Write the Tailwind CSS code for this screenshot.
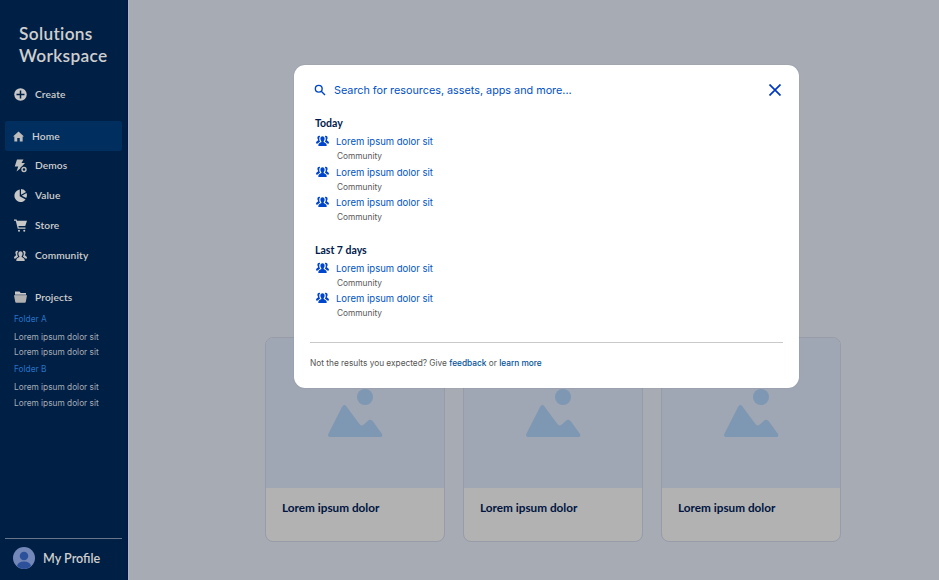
<!DOCTYPE html>
<html lang="en">
<head>
  <meta charset="UTF-8" />
  <title>Search - Solutions Workspace</title>
  <meta name="viewport" content="width=device-width, initial-scale=1.0" />
  <script src="https://cdn.jsdelivr.net/npm/@tailwindcss/browser@4"></script>
</head>

<body class="relative flex h-[580px] w-[939px] overflow-hidden bg-[#a6abb4] font-['Inter',sans-serif]">

  <!-- Shared icons -->
  <svg class="hidden">
    <symbol id="people" viewBox="0 0 28 24">
      <path d="M14 2c3 0 4.600 2.200 4.600 5.200 0 2-.8 4-2.100 5.200v1.700c0 1 5.700 2 6.300 5.200L23 23H5l.2-3.700c.6-3.200 6.300-4.200 6.300-5.200v-1.700C10.200 11.200 9.400 9.200 9.400 7.200 9.400 4.200 11 2 14 2z"/>
      <path d="M8.500 1C5.200 0 3 2.400 3 5.200c0 2.200 1 3.500 1.600 4.500.5 1.600-4.400 2.300-4.600 5.800v2.100h4.200c1-2.300 3-3.400 4.600-4.100C7.600 11.500 7 9 7 7c0-2.200.7-4 2-5.200z"/>
      <path d="M19.500 1c3.300-1 5.500 1.400 5.500 4.200 0 2.200-1 3.500-1.600 4.500-.5 1.600 4.400 2.300 4.600 5.800v2.100h-4.200c-1-2.300-3-3.400-4.600-4.100C20.400 11.500 21 9 21 7c0-2.200-.7-4-2-5.200z"/>
    </symbol>
    <symbol id="picture" viewBox="0 0 56 50">
      <circle cx="38" cy="9" r="8"/>
      <path d="M3 49Q0 48.500 1.500 45.500L15 19Q17 15.500 19.500 18.500L32 35.500Q34.500 39 37.500 36L41 32.700Q43.500 30.500 46 33.500L55 46Q56 49 53.500 49z"/>
    </symbol>
  </svg>

  <!-- Sidebar -->
  <aside class="flex w-32 shrink-0 flex-col border-r border-[#07144a] bg-[#001f44] text-[#cfcfcf] shadow-[1px_0_0_#b2b4bd]">
    <h1 class="mt-[23px] ml-[19px] font-['Lato',sans-serif] text-[17.3px] leading-[22px] font-semibold tracking-[0.32px]">Solutions<br />Workspace</h1>

    <nav class="mt-[12px] flex flex-col pl-[5px] font-['Lato',sans-serif] text-[10.2px] font-semibold tracking-[0.1px]">
      <a href="#" class="flex h-[30px] items-center gap-2 pl-[9px]">
        <svg class="h-[13px] w-[13px]" viewBox="0 0 26 26"><circle cx="13" cy="13" r="12.500" fill="#c7c7c7"/><path d="M13 5v16M5 13h16" stroke="#001f44" stroke-width="3"/></svg>
        <span class="pt-px">Create</span>
      </a>
      <a href="#" class="mt-[12px] flex h-[30px] w-[117px] items-center gap-2 rounded-[2px] bg-[#002e5e] pl-[8px]">
        <svg class="h-[11px] w-[11px]" viewBox="0 0 22 22" fill="#bdbdbd"><path d="M11 1 22 11h-2.700v10h-5.800v-7h-5v7H2.700V11H0z"/></svg>
        <span class="pt-px">Home</span>
      </a>
      <a href="#" class="flex h-[30px] items-center gap-2 pb-px pl-[9px]">
        <svg class="h-[14px] w-[13px]" viewBox="0 0 26 28" fill="#c0c0c0"><path d="M6 1h13l-4 7h7l-6 6.500a7 7 0 0 0-4 5L5 25l3.500-10H1.500z"/><circle cx="20" cy="21" r="4" fill="none" stroke="#c0c0c0" stroke-width="2.800"/></svg>
        <span class="pt-px">Demos</span>
      </a>
      <a href="#" class="flex h-[30px] items-center gap-2 pb-px pl-[9px]">
        <svg class="h-[13px] w-[13px]" viewBox="0 0 26 26" fill="#c7c7c7"><path d="M11.500 1v13.500l11.700 6.500A12.500 12.500 0 1 1 11.500 1z"/><path d="M14 0a12 12 0 0 1 10 6L14 11.500z"/><path d="M25 8.200A12 12 0 0 1 24.500 18L15.500 13.400z"/></svg>
        <span class="pt-px">Value</span>
      </a>
      <a href="#" class="flex h-[30px] items-center gap-2 pb-px pl-[9px]">
        <svg class="h-[13px] w-[13px]" viewBox="0 0 26 26" fill="#c7c7c7"><path d="M0 1h5.200l.8 2.500h20L22.500 14H8.800l.7 3H23v2.500H7.500L3.500 3.500H0z"/><circle cx="10" cy="23.300" r="2"/><circle cx="20.500" cy="23.300" r="2"/></svg>
        <span class="pt-px">Store</span>
      </a>
      <a href="#" class="flex h-[30px] items-center gap-2 pb-px pl-[9px]">
        <svg class="h-[12px] w-[13px] fill-[#c0c0c0]"><use href="#people"/></svg>
        <span class="pt-px">Community</span>
      </a>
      <a href="#" class="mt-[11px] flex h-[30px] items-center gap-2 pl-[9px]">
        <svg class="h-[12px] w-[13px]" viewBox="0 0 26 24"><path d="M2 1h9l2.500 3H24v5H2z" fill="#c7c7c7"/><path d="M2 7.800h22" stroke="#001f44" stroke-width="1"/><path d="M0 8.500h26L23.500 22q-.3 1.500-2 1.500h-17q-1.700 0-2-1.500z" fill="#b0b0b0"/></svg>
        <span class="pt-px">Projects</span>
      </a>
    </nav>

    <div class="ml-[14px] flex flex-col text-[8.3px] leading-[15.7px] text-[#a7adb8]">
      <a href="#" class="text-[#2872c4]">Folder A</a>
      <a href="#" class="mt-[2px]">Lorem ipsum dolor sit</a>
      <a href="#">Lorem ipsum dolor sit</a>
      <a href="#" class="mt-px text-[#2872c4]">Folder B</a>
      <a href="#" class="mt-[2px]">Lorem ipsum dolor sit</a>
      <a href="#">Lorem ipsum dolor sit</a>
    </div>

    <a href="#" class="mt-auto mr-[5px] ml-[5px] flex h-[42px] items-center gap-2 border-t-[1.5px] border-[#68758a] pb-[3px] pl-[8px] font-['Lato',sans-serif] text-[12.6px] font-semibold">
      <svg class="h-[22px] w-[22px]" viewBox="0 0 44 44"><circle cx="22" cy="22" r="22" fill="#7388b8"/><circle cx="22" cy="18" r="8.500" fill="#2d509b"/><path d="M8 38Q10 29 22 29t14 9Q30 44 22 44T8 38z" fill="#2d509b"/></svg>
      <span class="pt-[2px]">My Profile</span>
    </a>
  </aside>

  <!-- Resource cards -->
  <main class="flex flex-1 items-end gap-[18px] pb-[38px] pl-[137px] font-['Lato',sans-serif] text-[11.75px] font-bold text-[#001440]">
    <div class="h-[205px] w-[180px] overflow-hidden rounded-lg border border-[#989ba8] bg-[#b2b2b2]">
      <div class="flex h-[150px] justify-center bg-[#9fa6b4] pt-[50px]"><svg class="h-[50px] w-[56px] fill-[#7e98b4]"><use href="#picture"/></svg></div>
      <h3 class="mt-[12px] pl-4 leading-4">Lorem ipsum dolor</h3>
    </div>
    <div class="h-[205px] w-[180px] overflow-hidden rounded-lg border border-[#989ba8] bg-[#b2b2b2]">
      <div class="flex h-[150px] justify-center bg-[#9fa6b4] pt-[50px]"><svg class="h-[50px] w-[56px] fill-[#7e98b4]"><use href="#picture"/></svg></div>
      <h3 class="mt-[12px] pl-4 leading-4">Lorem ipsum dolor</h3>
    </div>
    <div class="h-[205px] w-[180px] overflow-hidden rounded-lg border border-[#989ba8] bg-[#b2b2b2]">
      <div class="flex h-[150px] justify-center bg-[#9fa6b4] pt-[50px]"><svg class="h-[50px] w-[56px] fill-[#7e98b4]"><use href="#picture"/></svg></div>
      <h3 class="mt-[12px] pl-4 leading-4">Lorem ipsum dolor</h3>
    </div>
  </main>

  <!-- Search dialog -->
  <div class="absolute top-[65px] left-[294px] flex h-[323px] w-[505px] flex-col rounded-[11px] bg-white px-4 shadow-[0_0_1px_#777c88]">
    <div class="mt-[15px] flex h-5 items-center pl-[4px] text-[10.8px] text-[#0050c8]">
      <svg class="mr-[8px] h-3 w-3" viewBox="0 0 24 24" fill="none" stroke="#0046c8" stroke-width="2.800"><circle cx="9.500" cy="9.500" r="6.800"/><path d="m14.500 14.500 7.500 7.500"/></svg>
      <span class="pt-[2px]">Search for resources, assets, apps and more...</span>
      <svg class="mr-[2px] ml-auto h-3 w-3" viewBox="0 0 24 24" stroke="#0038c4" stroke-width="3.400"><path d="m1 1 22 22M23 1 1 23"/></svg>
    </div>

    <h2 class="mt-[15px] pl-[5px] font-['Lato',sans-serif] text-[10.5px] leading-4 font-bold text-[#001a4d]">Today</h2>
    <div id="todayList" class="mt-[4px] flex flex-col"></div>
    <h2 class="mt-[15px] pl-[5px] font-['Lato',sans-serif] text-[10.5px] leading-4 font-bold text-[#001a4d]">Last 7 days</h2>
    <div id="weekList" class="mt-[4px] flex flex-col"></div>

    <p class="mt-auto h-[46px] border-t border-[#c9c9cd] pt-[14px] text-[8.3px] leading-3 whitespace-nowrap text-[#555]">Not the results you expected? Give <a href="#" class="font-medium text-[#00529b]">feedback</a> or <a href="#" class="font-medium text-[#00529b]">learn more</a></p>
  </div>

  <script>
    const results = {
      todayList: ["Lorem ipsum dolor sit", "Lorem ipsum dolor sit", "Lorem ipsum dolor sit"],
      weekList: ["Lorem ipsum dolor sit", "Lorem ipsum dolor sit"]
    };

    Object.keys(results).forEach(id => {
      document.getElementById(id).innerHTML = results[id].map(title => `
        <a href="#" class="flex h-[30.5px] gap-[7px] pl-[6px]">
          <svg class="h-[12px] w-[13px] fill-[#0046cc]"><use href="#people"/></svg>
          <span class="flex flex-col">
            <span class="text-[9.5px] leading-[14px] text-[#0054c6]">${title}</span>
            <span class="pl-px text-[8.3px] leading-[14px] text-[#58585a]">Community</span>
          </span>
        </a>
      `).join("");
    });
  </script>
</body>
</html>
